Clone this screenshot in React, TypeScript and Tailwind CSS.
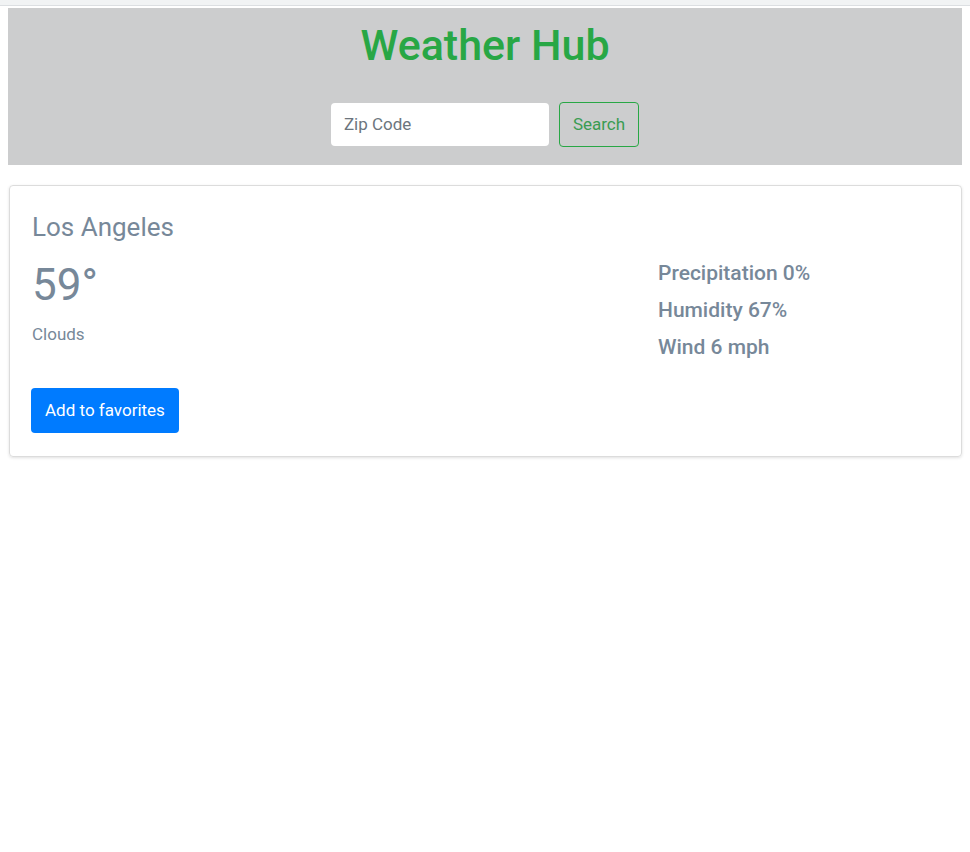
export default function App() {
  return (
    <div className="min-h-[852px] bg-white font-['Roboto','Liberation_Sans',sans-serif] text-[18px] leading-[1.5]">
      <div className="h-[6px] bg-[#f1f3f4] border-b border-[#dcdfe2]" />
      <div className="px-2 pt-[2px]">
        <header className="bg-[#cccdce] pt-[12px] pb-[18px] text-center">
          <h1 className="text-[43px] font-medium leading-[1.2] text-[#28a745]">Weather Hub</h1>
          <form
            className="mt-[31px] flex justify-center gap-[10px]"
            onSubmit={(e) => e.preventDefault()}
          >
            <input
              type="text"
              placeholder="Zip Code"
              className="h-[43px] w-[218px] rounded-[4px] bg-white px-[13px] text-[17px] text-[#495057] placeholder:text-[#6c757d] outline-none"
            />
            <button
              type="submit"
              className="h-[45px] -mt-[1px] rounded-[4px] border border-[#28a745] px-[13px] pt-[1px] text-[17px] text-[#3a9c52]"
            >
              Search
            </button>
          </form>
        </header>

        <div className="mt-[20px] ml-[1px] rounded-[4px] border border-[#dcdcdc] shadow-[0_1px_3px_rgba(0,0,0,0.12)] px-[22px] pt-[26px] pb-[23px] text-[#778899]">
          <h3 className="text-[26px] font-normal leading-[1.2]">Los Angeles</h3>
          <div className="mt-[16px] grid grid-cols-[626px_1fr]">
            <div>
              <div className="text-[44px] leading-[1.2]">59°</div>
              <div className="mt-[10px] text-[17px]">Clouds</div>
            </div>
            <div className="pt-[2px] text-[21px] font-medium leading-[1.2] flex flex-col gap-[12px]">
              <div>Precipitation 0%</div>
              <div>Humidity 67%</div>
              <div>Wind 6 mph</div>
            </div>
          </div>
          <button className="mt-[28px] -ml-[1px] h-[45px] rounded-[4px] bg-[#007bff] px-[14px] text-[17px] text-white">
            Add to favorites
          </button>
        </div>
      </div>
    </div>
  );
}
